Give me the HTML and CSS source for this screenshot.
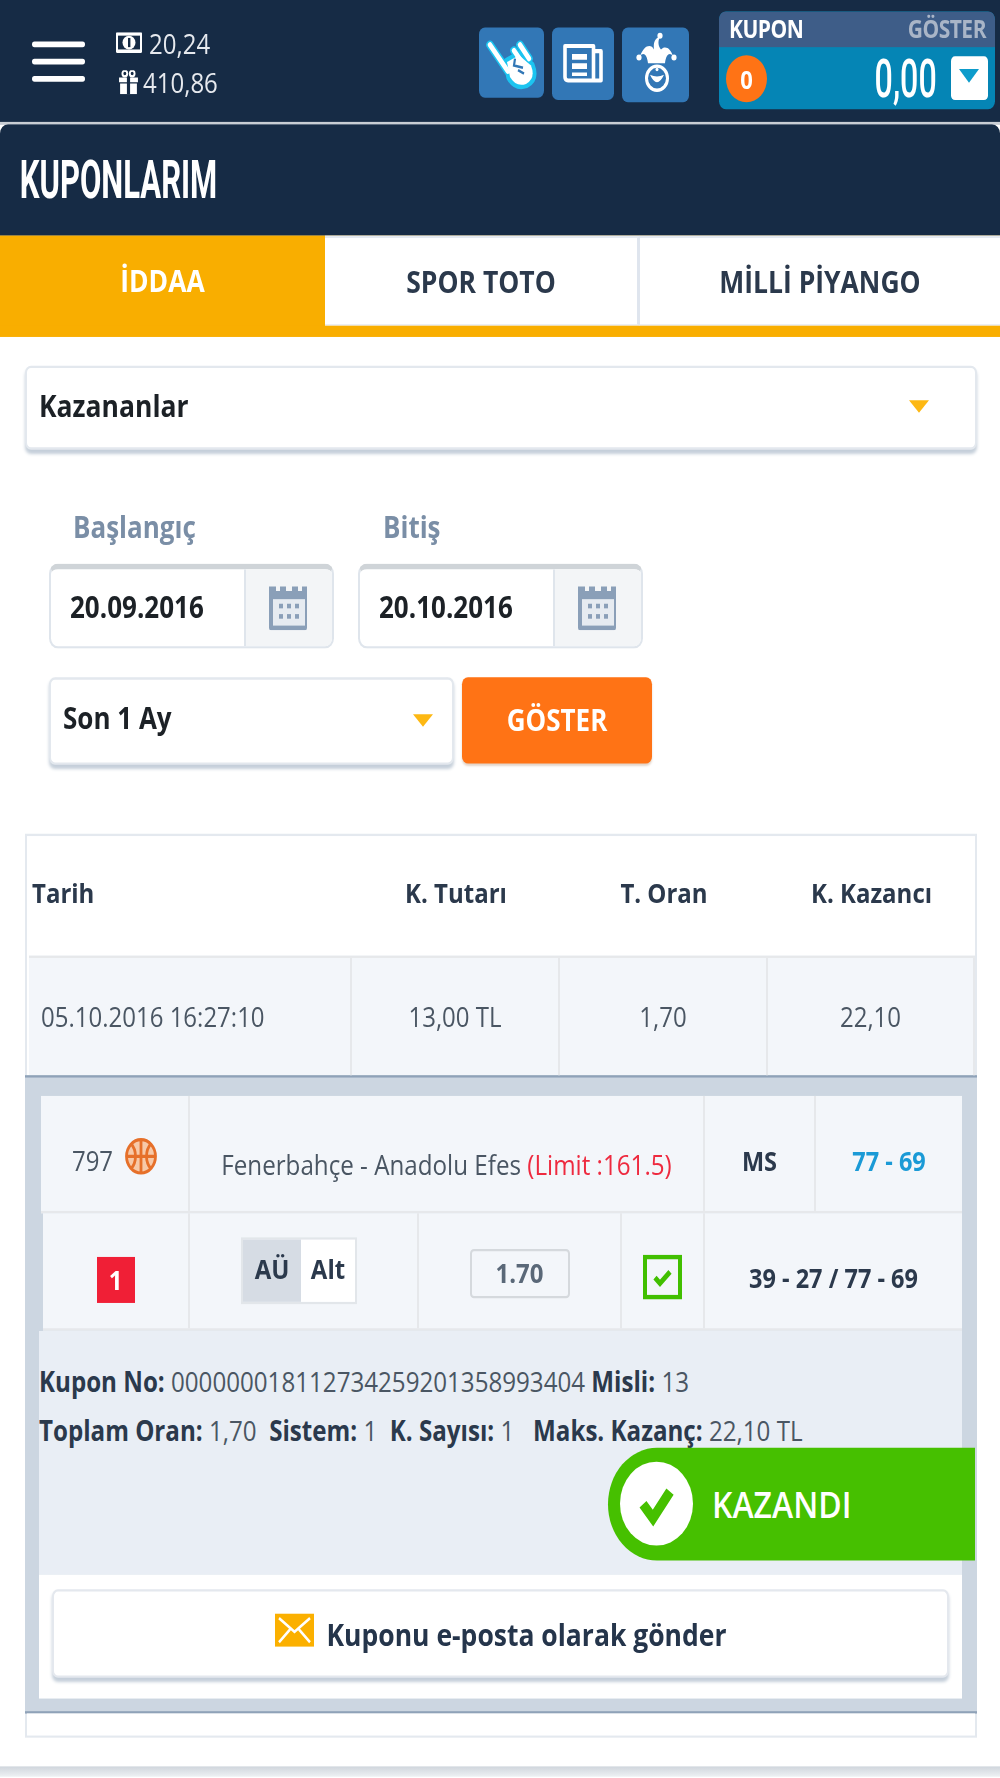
FILE: index.html
```html
<!DOCTYPE html>
<html lang="tr">
<head>
  <meta charset="UTF-8" />
  <meta name="viewport" content="width=device-width, initial-scale=1.0"/>
  <title>Kuponlarım</title>
  <link rel="stylesheet" href="styles.css">
</head>
<body>
  <div class="page">
    <header class="topbar">
      <div class="hamburger"><span></span><span></span><span></span></div>
      <div class="balances">
        <div class="balance">
          <svg class="ico-money" viewBox="0 0 26 18"><rect width="26" height="18" rx="1" fill="#fff"/><rect x="2" y="3" width="22" height="12" fill="#162b45"/><ellipse cx="13" cy="9" rx="6.5" ry="6" fill="#fff"/><rect x="12" y="5" width="2.4" height="8" fill="#162b45"/></svg>
          <span>20,24</span>
        </div>
        <div class="balance bonus">
          <svg class="ico-gift" viewBox="0 0 20 20"><path d="M1 6h18v4H1zM2 11h16v9H2z" fill="#fff"/><path d="M8.500 5h3v15h-3z" fill="#162b45"/><circle cx="6.500" cy="2.800" r="2.300" fill="none" stroke="#fff" stroke-width="1.800"/><circle cx="13.500" cy="2.800" r="2.300" fill="none" stroke="#fff" stroke-width="1.800"/></svg>
          <span>410,86</span>
        </div>
      </div>
      <div class="quick">
        <a class="quick-btn hand">
          <svg viewBox="0 0 65 61">
            <g fill="none" stroke="#1cc4f0" stroke-linecap="round" stroke-linejoin="round" stroke-width="7.500">
              <path d="M11 15 L29 38"/><path d="M35 20 L42 29"/><path d="M41 15 L50 27"/><path d="M28 30 L40 24 L52 33 Q57 44 47 49 Q37 52 31 43 Z"/>
            </g>
            <g fill="none" stroke="#fff" stroke-linecap="round" stroke-linejoin="round" stroke-width="4.500">
              <path d="M11 15 L29 38"/><path d="M35 20 L42 29"/><path d="M41 15 L50 27"/>
            </g>
            <path d="M28 30 L40 24 L52 33 Q57 44 47 49 Q37 52 31 43 Z" fill="#fff"/>
            <path d="M36 27 L35 33 L44 35 M39 37 L45 40" fill="none" stroke="#3277b6" stroke-width="2.200"/>
          </svg>
        </a>
        <a class="quick-btn news">
          <svg viewBox="0 0 62 63">
            <path d="M41.500 20.500 H49 V46 H16 Q13 46 13 43 V16 H41.500 V46" fill="none" stroke="#fff" stroke-width="3.600" stroke-linejoin="round"/>
            <path d="M20 23h15v5H20zM20 31h15v5H20zM20 39h15v3H20z" fill="#fff"/>
          </svg>
        </a>
        <a class="quick-btn joker">
          <svg viewBox="0 0 67 65">
            <path d="M26 31 C25 23 21 21 18 25 C22 15 29 14 32 19 C31 13 33 9 38 8 C35 13 37 17 39 19 C43 15 49 18 51 25 C48 21 44 23 43 31 Z" fill="#fff"/>
            <circle cx="17" cy="26" r="2.600" fill="#fff"/><circle cx="38" cy="7" r="2.600" fill="#fff"/><circle cx="52" cy="26" r="2.600" fill="#fff"/>
            <circle cx="35" cy="44" r="10.500" fill="none" stroke="#fff" stroke-width="3"/>
            <path d="M28 41 Q35 54 42 41 Q35 44 28 41 Z" fill="#fff"/>
            <circle cx="35" cy="36.500" r="1.500" fill="#fff"/>
          </svg>
        </a>
      </div>
      <div class="slip">
        <div class="slip-top"><span>KUPON</span><span class="slip-show">GÖSTER</span></div>
        <div class="slip-body">
          <span class="slip-count">0</span>
          <span class="slip-amount"><span>0,00</span></span>
          <span class="slip-drop"></span>
        </div>
      </div>
    </header>

    <div class="title"><h1>KUPONLARIM</h1></div>

    <nav class="tabs">
      <a class="tab active">İDDAA</a>
      <a class="tab">SPOR TOTO</a>
      <a class="tab">MİLLİ PİYANGO</a>
    </nav>

    <section class="filters">
      <div class="select main-select">Kazananlar<i class="caret"></i></div>

      <div class="date-labels">
        <label>Başlangıç</label>
        <label>Bitiş</label>
      </div>
      <div class="dates">
        <div class="date">
          <span class="date-value">20.09.2016</span>
          <span class="date-addon">
            <svg class="ico-cal" viewBox="0 0 40 39"><path d="M2 1h5v4h4V1h6v4h6V1h6v4h4V1h5a2 2 0 0 1 0 0v36a2 2 0 0 1-2 2H2a2 2 0 0 1-2-2V1z" fill="#8a9fb8"/><rect x="4" y="12" width="32" height="23" fill="#e6ebf1"/><g fill="#8a9fb8"><rect x="10" y="16" width="4" height="4"/><rect x="18" y="16" width="4" height="4"/><rect x="26" y="16" width="4" height="4"/><rect x="10" y="25" width="4" height="4"/><rect x="18" y="25" width="4" height="4"/><rect x="26" y="25" width="4" height="4"/></g></svg>
          </span>
        </div>
        <div class="date">
          <span class="date-value">20.10.2016</span>
          <span class="date-addon">
            <svg class="ico-cal" viewBox="0 0 40 39"><path d="M2 1h5v4h4V1h6v4h6V1h6v4h4V1h5a2 2 0 0 1 0 0v36a2 2 0 0 1-2 2H2a2 2 0 0 1-2-2V1z" fill="#8a9fb8"/><rect x="4" y="12" width="32" height="23" fill="#e6ebf1"/><g fill="#8a9fb8"><rect x="10" y="16" width="4" height="4"/><rect x="18" y="16" width="4" height="4"/><rect x="26" y="16" width="4" height="4"/><rect x="10" y="25" width="4" height="4"/><rect x="18" y="25" width="4" height="4"/><rect x="26" y="25" width="4" height="4"/></g></svg>
          </span>
        </div>
      </div>
      <div class="range">
        <div class="select range-select">Son 1 Ay<i class="caret"></i></div>
        <button class="show-btn">GÖSTER</button>
      </div>
    </section>

    <section class="coupons">
      <div class="row head">
        <div class="cell first">Tarih</div>
        <div class="cell">K. Tutarı</div>
        <div class="cell">T. Oran</div>
        <div class="cell">K. Kazancı</div>
      </div>
      <div class="row data">
        <div class="cell first">05.10.2016 16:27:10</div>
        <div class="cell">13,00 TL</div>
        <div class="cell">1,70</div>
        <div class="cell">22,10</div>
      </div>

      <div class="detail">
        <div class="bet bet-top">
          <div class="bet-cell">
            <span>797</span>
            <svg class="ico-ball" viewBox="0 0 32 33">
              <circle cx="16" cy="16.500" r="15" fill="#f7c9a8"/>
              <g fill="none" stroke="#e6702a" stroke-width="2.800">
                <circle cx="16" cy="16.500" r="14.500"/>
                <path d="M16 2v29M2 16.500h28M6 5.500c6 6 6 16 0 22M26 5.500c-6 6-6 16 0 22"/>
              </g>
            </svg>
          </div>
          <div class="bet-cell match">Fenerbahçe - Anadolu Efes <span class="limit">(Limit :161.5)</span></div>
          <div class="bet-cell strong">MS</div>
          <div class="bet-cell score">77 - 69</div>
        </div>
        <div class="bet bet-bottom">
          <div class="bet-cell"><span class="pick">1</span></div>
          <div class="bet-cell">
            <span class="market"><b>AÜ</b><b class="market-val">Alt</b></span>
          </div>
          <div class="bet-cell"><span class="odd">1.70</span></div>
          <div class="bet-cell">
            <svg class="ico-check" viewBox="0 0 39 39"><rect x="2" y="2" width="35" height="35" fill="none" stroke="#41bf00" stroke-width="4"/><path d="M12 20l5 5 10-10" fill="none" stroke="#41bf00" stroke-width="4.500"/></svg>
          </div>
          <div class="bet-cell strong">39 - 27 / 77 - 69</div>
        </div>

        <div class="info">
          <p><b>Kupon No:</b> 000000018112734259201358993404 <b>Misli:</b> 13</p>
          <p><b>Toplam Oran:</b> 1,70 &nbsp;<b>Sistem:</b> 1 &nbsp;<b>K. Sayısı:</b> 1 &nbsp; <b>Maks. Kazanç:</b> 22,10 TL</p>
          <div class="won">
            <span class="won-mark">
              <svg viewBox="0 0 73 73"><path d="M23 37l10 12 17-23" fill="none" stroke="#46c000" stroke-width="9"/></svg>
            </span>
            <span>KAZANDI</span>
          </div>
        </div>

        <div class="send">
          <button class="send-btn">
            <svg class="ico-mail" viewBox="0 0 39 29"><rect width="39" height="29" fill="#fbb000"/><path d="M4 4l15.500 12L35 4M4 25l11-11M35 25L24 14" fill="none" stroke="#fff" stroke-width="2.400"/></svg>
            Kuponu e-posta olarak gönder
          </button>
        </div>
      </div>
      <div class="coupons-end"></div>
    </section>

    <div class="bottom-band"></div>
  </div>
</body>
</html>
```

FILE: styles.css
```css
html, body {
  margin: 0;
  height: 100%;
  overflow: hidden;
  background: #fff;
}
body {
  font-family: 'Open Sans', 'Noto Sans', sans-serif;
  font-size: 24px;
  color: #4a5663;
}
.page {
  width: 1000px;
  height: 1546px;
  transform: scaleY(1.15);
  transform-origin: 0 0;
  filter: blur(0.5px);
}
button {
  font-family: inherit;
  cursor: pointer;
}
svg {
  display: block;
}

/* top bar */
.topbar {
  display: flex;
  height: 106px;
  background: #162b45;
  border-bottom: 2px solid #c9ced4;
  position: relative;
}
.hamburger {
  display: flex;
  flex-direction: column;
  gap: 10px;
  width: 53px;
  margin: 36px 0 0 32px;
}
.hamburger span {
  height: 5px;
  background: #fff;
  border-radius: 3px;
}
.balances {
  margin: 20px 0 0 31px;
  width: 363px;
  color: #e6e9ee;
}
.balance {
  display: flex;
  align-items: center;
  gap: 7px;
  height: 34px;
}
.bonus {
  margin-left: 1px;
  gap: 3px;
}
.ico-money {
  width: 26px;
  height: 18px;
}
.ico-gift {
  width: 23px;
  height: 21px;
}
.quick {
  display: flex;
  align-items: flex-start;
  gap: 8px;
  margin-top: 24px;
}
.quick-btn {
  display: block;
  background: #3277b6;
  border-radius: 6px;
}
.quick-btn svg {
  width: 100%;
  height: 100%;
}
.hand { width: 65px; height: 61px; }
.news { width: 62px; height: 63px; }
.joker { width: 67px; height: 65px; }
.slip {
  width: 276px;
  height: 85px;
  margin: 10px 0 0 30px;
  border-radius: 7px;
  overflow: hidden;
  background: #0585b5;
}
.slip-top {
  display: flex;
  justify-content: space-between;
  height: 31px;
  padding: 0 9px 0 10px;
  background: #3e5d88;
  color: #fff;
  font-size: 21px;
  font-weight: 700;
  line-height: 31px;
  letter-spacing: -0.5px;
}
.slip-show {
  color: #a9b5c7;
}
.slip-body {
  display: flex;
  align-items: center;
  height: 54px;
  padding: 0 7px 0 7px;
}
.slip-count {
  width: 41px;
  height: 41px;
  border-radius: 50%;
  background: #ff7315;
  color: #fff;
  font-size: 22px;
  font-weight: 700;
  line-height: 41px;
  text-align: center;
}
.slip-amount {
  flex: 1;
  text-align: right;
  font-family: Roboto, sans-serif;
  font-size: 46px;
  font-weight: 500;
  color: #fff;
  margin-right: 14px;
}
.slip-amount span {
  display: inline-block;
  transform: scaleX(0.7);
  transform-origin: 100% 50%;
}
.slip-drop {
  position: relative;
  width: 37px;
  height: 38px;
  background: #fff;
  border-radius: 4px;
}
.slip-drop::after {
  content: "";
  position: absolute;
  left: 8px;
  top: 11px;
  border: 10.500px solid transparent;
  border-top: 12px solid #0d9ccb;
  border-bottom: 0;
}

/* page title and tabs */
.title {
  height: 97px;
  background: #162b45;
  border-radius: 8px 8px 0 0;
}
.title h1 {
  display: inline-block;
  margin: 0;
  padding-left: 30px;
  font-family: Roboto, sans-serif;
  font-size: 47px;
  font-weight: 700;
  line-height: 95px;
  color: #fff;
  transform: scaleX(0.66);
  transform-origin: 0 50%;
  white-space: nowrap;
}
.tabs {
  display: flex;
  height: 78px;
  padding-bottom: 9.500px;
  background: #f9ae00;
}
.tab {
  display: flex;
  align-items: center;
  justify-content: center;
  box-sizing: border-box;
  background: #fff;
  border: 2px solid #e4e9f0;
  border-left: 0;
  border-right: 3px solid #dfe5ee;
  border-bottom-width: 1px;
  font-size: 26.500px;
  font-weight: 700;
  color: #2b394c;
}
.tab:nth-child(1) { width: 325px; }
.tab:nth-child(2) { width: 315px; }
.tab:nth-child(3) { width: 360px; border-right: 0; }
.tab.active {
  background: #f9ae00;
  border: 0;
  color: #fff;
}

/* filters */
.filters {
  padding: 25px 23px 0 25px;
}
.select {
  position: relative;
  box-sizing: border-box;
  background: #fff;
  border: 2px solid #e3e8ee;
  border-radius: 6px;
  box-shadow: 0 3px 3px #c5cfda;
  font-size: 26px;
  font-weight: 700;
  color: #1c2126;
}
.main-select {
  height: 73px;
  margin-bottom: 2px;
  padding-left: 12px;
  font-size: 26.500px;
  line-height: 66px;
}
.caret {
  position: absolute;
  top: 50%;
  margin-top: -6px;
  border: 10px solid transparent;
  border-top: 11px solid #fdb813;
  border-bottom: 0;
}
.main-select .caret { right: 46px; }
.range-select .caret { right: 19px; }
.date-labels {
  display: flex;
  height: 30px;
  padding: 50px 0 17px 48px;
  font-size: 26px;
  font-weight: 700;
  line-height: 30px;
  color: #7a8ea6;
}
.date-labels label {
  width: 310px;
}
.dates {
  display: flex;
  gap: 24px;
  margin-left: 24px;
}
.date {
  display: flex;
  box-sizing: border-box;
  width: 285px;
  height: 74px;
  background: #fff;
  border: 2px solid #dfe5ec;
  border-top: 5px solid #cfd4d8;
  border-radius: 9px;
  overflow: hidden;
}
.date-value {
  box-sizing: border-box;
  width: 193px;
  padding-left: 19px;
  font-size: 26px;
  font-weight: 700;
  line-height: 64px;
  color: #1c2126;
}
.date-addon {
  flex: 1;
  display: flex;
  align-items: center;
  justify-content: center;
  background: #f3f5f7;
  border-left: 2px solid #dfe5ec;
}
.ico-cal {
  width: 40px;
  height: 39px;
}
.range {
  display: flex;
  gap: 8px;
  margin: 25px 0 0 24px;
}
.range-select {
  width: 405px;
  height: 76px;
  padding-left: 12px;
  line-height: 67px;
}
.show-btn {
  width: 190px;
  height: 75px;
  border: 0;
  border-radius: 6px;
  background: #ff7315;
  box-shadow: 0 2px 2px #e3d5ca;
  color: #fff;
  font-size: 26px;
  font-weight: 700;
}

/* coupon table */
.coupons {
  margin: 60px 23px 0 25px;
  border: 2px solid #e4e9ef;
}
.row {
  display: grid;
  grid-template-columns: 323px 208px 208px 207px;
  margin-left: 2px;
  margin-right: 0;
}
.cell {
  display: flex;
  align-items: center;
  justify-content: center;
}
.head {
  box-sizing: border-box;
  height: 104px;
  padding-bottom: 6px;
  font-weight: 700;
  font-size: 24px;
  color: #2b394c;
}
.head .first {
  justify-content: flex-start;
  padding-left: 3px;
}
.data {
  height: 104px;
  background: #f3f6fa;
  border-top: 2px solid #e6e8eb;
  box-sizing: border-box;
}
.data .cell {
  border-right: 2px solid #e6e8eb;
}
.data .first {
  justify-content: flex-start;
  padding-left: 12px;
}
.detail {
  margin: 0 -2px;
  padding: 16px 15px 11.500px 14px;
  background: #ccd6e1;
  border-top: 2px solid #8fa2b8;
  border-bottom: 2px solid #8fa2b8;
}
.bet {
  display: grid;
  height: 102px;
  background: #f3f6fa;
  box-sizing: border-box;
  border-bottom: 2px solid #e6e8eb;
}
.bet-top {
  grid-template-columns: 149px 515px 111px 146px;
  margin-left: 2px;
}
.bet-bottom {
  grid-template-columns: 147px 229px 203px 83px 257px;
  margin-left: 4px;
}
.bet-cell {
  display: flex;
  align-items: center;
  justify-content: center;
  gap: 12px;
  box-sizing: border-box;
  padding-top: 12px;
  border-right: 2px solid #e6e8eb;
}
.bet-cell:last-child {
  border-right: 0;
}
.match {
  display: block;
  padding-top: 43px;
  text-align: center;
  font-size: 24.200px;
  white-space: nowrap;
}
.limit {
  color: #ee2a3f;
}
.strong {
  font-weight: 700;
  font-size: 23.500px;
  color: #2b394c;
}
.score {
  font-weight: 700;
  font-size: 23.500px;
  color: #1a9ad6;
}
.ico-ball {
  width: 32px;
  height: 33px;
  margin-top: -6px;
}
.pick {
  width: 38px;
  height: 40px;
  margin-top: 4px;
  background: #f01f36;
  color: #fff;
  font-weight: 700;
  line-height: 40px;
  text-align: center;
}
.market {
  display: flex;
  height: 58px;
  margin: -12px 9px 0 0;
  border: 2px solid #e2e6ea;
  box-sizing: border-box;
  color: #2b394c;
  font-size: 24px;
  line-height: 50px;
}
.market b {
  width: 58px;
  font-weight: 700;
  text-align: center;
  background: #d6dce4;
}
.market b.market-val {
  width: 54px;
  background: #fff;
}
.odd {
  width: 100px;
  height: 43px;
  margin-top: -6px;
  box-sizing: border-box;
  border: 2px solid #d5d9dd;
  border-radius: 4px;
  font-weight: 700;
  line-height: 38px;
  text-align: center;
  color: #5a6878;
}
.ico-check {
  width: 39px;
  height: 39px;
}
.info {
  position: relative;
  box-sizing: border-box;
  height: 212px;
  padding-top: 22.500px;
  background: #e9eef5;
}
.info p {
  margin: 0;
  font-size: 24.150px;
  line-height: 43px;
  white-space: nowrap;
}
.info b {
  font-weight: 700;
  color: #2b394c;
}
.won {
  position: absolute;
  right: -13px;
  top: 102px;
  display: flex;
  align-items: center;
  gap: 19px;
  width: 367px;
  height: 98px;
  box-sizing: border-box;
  padding-left: 12px;
  background: #46c000;
  border-radius: 49px 0 0 49px;
  color: #fff;
  font-size: 32px;
  font-weight: 600;
}
.won-mark {
  width: 73px;
  height: 73px;
  border-radius: 50%;
  background: #fff;
}
.send {
  height: 108px;
  padding: 13.500px 13px 0;
  box-sizing: border-box;
  background: #fff;
}
.send-btn {
  display: flex;
  align-items: center;
  justify-content: center;
  gap: 13px;
  width: 100%;
  height: 77px;
  background: #fff;
  border: 2px solid #e4e8ee;
  border-radius: 6px;
  box-shadow: 0 3px 3px #c5cfda;
  color: #25354b;
  font-size: 26.500px;
  font-weight: 700;
}
.ico-mail {
  width: 39px;
  height: 29px;
  margin-top: -6px;
}
.coupons-end {
  height: 19px;
  background: #fff;
}
.bottom-band {
  height: 9px;
  margin-top: 25px;
  background: linear-gradient(#cfd5dc, #eef1f4);
}
```
